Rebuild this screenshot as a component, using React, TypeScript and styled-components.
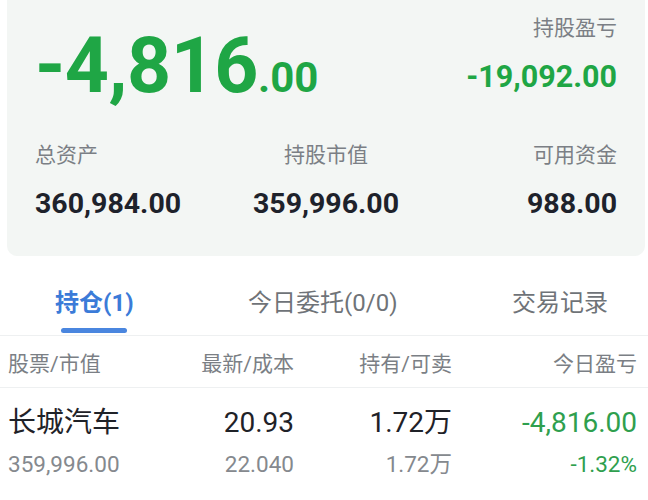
import React from 'react'
import styled, { createGlobalStyle } from 'styled-components'

const Global = createGlobalStyle`
  body {
    margin: 0;
    background: #fff;
    font-family: Roboto, "Noto Sans CJK SC", sans-serif;
  }
`

const Page = styled.div`
  width: 648px;
  height: 500px;
  overflow: hidden;
  background: #fff;
`

const Card = styled.div`
  margin: 0 3px 0 7px;
  padding: 0 28px 34px;
  background: #f3f6f4;
  border-radius: 0 0 10px 10px;
`

const TopRow = styled.div`
  display: flex;
  justify-content: space-between;
  align-items: flex-start;
  height: 120px;
`

const BigAmount = styled.div`
  margin-top: 28px;
  font-size: 77px;
  line-height: 77px;
  font-weight: 700;
  color: #1fa645;
  letter-spacing: -0.5px;
`

const Cents = styled.span`
  font-size: 42px;
  letter-spacing: 0;
`

const HoldCol = styled.div`
  display: flex;
  flex-direction: column;
  align-items: flex-end;
`

const Label = styled.div<{ $top?: number }>`
  margin-top: ${p => p.$top ?? 0}px;
  font-size: 21px;
  line-height: 28px;
  color: #7b7f85;
`

const HoldValue = styled.div`
  margin-top: 17px;
  font-size: 30.5px;
  line-height: 36px;
  font-weight: 700;
  color: #1fa645;
`

const Stats = styled.div`
  display: grid;
  grid-template-columns: 1fr 1fr 1fr;
  margin-top: 21px;
`

const StatCell = styled.div<{ $align: 'left' | 'center' | 'right' }>`
  text-align: ${p => p.$align};
`

const StatValue = styled.div`
  margin-top: 17px;
  font-size: 28.5px;
  line-height: 36px;
  font-weight: 700;
  color: #1e222b;
`

const Tabs = styled.div`
  display: flex;
  justify-content: space-between;
  padding: 31px 40px 2px 55px;
  border-bottom: 1px solid #eef0f1;
`

const Tab = styled.div<{ $active?: boolean }>`
  display: flex;
  flex-direction: column;
  align-items: center;
  font-size: 24px;
  line-height: 32px;
  font-weight: ${p => (p.$active ? 700 : 400)};
  color: ${p => (p.$active ? '#3b7bd8' : '#6f7378')};
`

const TabBar = styled.div<{ $active?: boolean }>`
  margin-top: 9px;
  width: 66px;
  height: 5px;
  border-radius: 3px;
  background: ${p => (p.$active ? '#4a86df' : 'transparent')};
`

const Grid = styled.div`
  display: grid;
  grid-template-columns: 152px 134px 158px 1fr;
  padding: 0 11px 0 8px;
`

const HeadRow = styled(Grid)`
  height: 51px;
  align-items: center;
  border-bottom: 1px solid #eef0f1;
  font-size: 21px;
  color: #7b7f85;
`

const HeadCell = styled.div<{ $right?: boolean }>`
  text-align: ${p => (p.$right ? 'right' : 'left')};
`

const DataRow = styled(Grid)`
  padding-top: 17px;
  row-gap: 8px;
`

const Main = styled.div<{ $right?: boolean; $green?: boolean }>`
  text-align: ${p => (p.$right ? 'right' : 'left')};
  font-size: 28px;
  line-height: 36px;
  color: ${p => (p.$green ? '#2f9f4e' : '#1f2228')};
`

const Sub = styled.div<{ $right?: boolean; $green?: boolean }>`
  text-align: ${p => (p.$right ? 'right' : 'left')};
  font-size: 22.5px;
  line-height: 30px;
  color: ${p => (p.$green ? '#2f9f4e' : '#85898e')};
`

export default function App() {
  return (
    <Page>
      <Global />
      <Card>
        <TopRow>
          <BigAmount>
            -4,816<Cents>.00</Cents>
          </BigAmount>
          <HoldCol>
            <Label $top={14}>持股盈亏</Label>
            <HoldValue>-19,092.00</HoldValue>
          </HoldCol>
        </TopRow>
        <Stats>
          <StatCell $align="left">
            <Label>总资产</Label>
            <StatValue>360,984.00</StatValue>
          </StatCell>
          <StatCell $align="center">
            <Label>持股市值</Label>
            <StatValue>359,996.00</StatValue>
          </StatCell>
          <StatCell $align="right">
            <Label>可用资金</Label>
            <StatValue>988.00</StatValue>
          </StatCell>
        </Stats>
      </Card>

      <Tabs>
        <Tab $active>
          持仓(1)
          <TabBar $active />
        </Tab>
        <Tab>
          今日委托(0/0)
          <TabBar />
        </Tab>
        <Tab>
          交易记录
          <TabBar />
        </Tab>
      </Tabs>

      <HeadRow>
        <HeadCell>股票/市值</HeadCell>
        <HeadCell $right>最新/成本</HeadCell>
        <HeadCell $right>持有/可卖</HeadCell>
        <HeadCell $right>今日盈亏</HeadCell>
      </HeadRow>

      <DataRow>
        <Main>长城汽车</Main>
        <Main $right>20.93</Main>
        <Main $right>1.72万</Main>
        <Main $right $green>-4,816.00</Main>
        <Sub>359,996.00</Sub>
        <Sub $right>22.040</Sub>
        <Sub $right>1.72万</Sub>
        <Sub $right $green>-1.32%</Sub>
      </DataRow>
    </Page>
  )
}
